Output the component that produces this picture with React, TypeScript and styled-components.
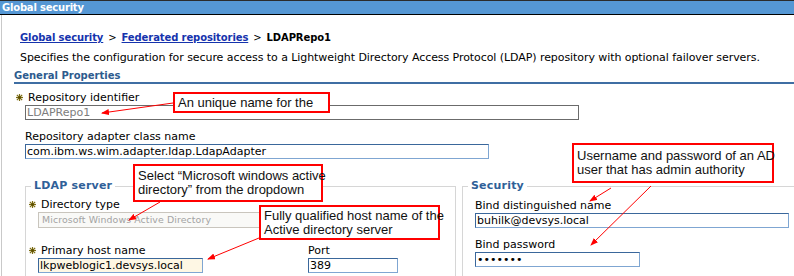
import React from "react";
import styled, { createGlobalStyle } from "styled-components";

const GlobalStyle = createGlobalStyle`
  html, body { margin: 0; padding: 0; background: #fff; }
  body { font-family: "DejaVu Sans", Verdana, sans-serif; }
`;

const Screen = styled.div`
  position: relative;
  width: 794px;
  height: 276px;
  overflow: hidden;
  background: #fff;
  font-family: "DejaVu Sans", Verdana, sans-serif;
  color: #000;
`;

const TitleBar = styled.div`
  height: 13px;
  border-top: 1px solid #2b2b2b;
  border-bottom: 1px solid #000;
  background: #5597d4;
  color: #fff;
  font-weight: bold;
  font-size: 10px;
  line-height: 13px;
  padding-left: 2px;
  letter-spacing: -0.2px;
  white-space: nowrap;
`;

const Main = styled.div`
  margin-left: 1px;
  border-left: 1px solid #c9c9c9;
  padding: 16px 0 0 12px;
  height: 300px;
`;

const Breadcrumb = styled.div`
  padding-left: 6px;
  font-size: 10px;
  font-weight: bold;
  line-height: 14px;
  letter-spacing: -0.1px;
  white-space: nowrap;
`;

const Crumb = styled.a`
  color: #1533ad;
  text-decoration: underline;
`;

const Sep = styled.span`
  font-weight: normal;
  margin: 0 5px;
`;

const Description = styled.div`
  margin-top: 6px;
  padding-left: 6px;
  font-size: 11px;
  line-height: 14px;
  letter-spacing: -0.07px;
  white-space: nowrap;
`;

const SectionHeader = styled.div`
  margin-top: 4px;
  font-size: 10px;
  font-weight: bold;
  line-height: 13px;
  color: #2d5b8e;
  border-bottom: 2px solid #3f6ea3;
`;

const Fields = styled.div`
  margin-top: 7px;
  padding-left: 11px;
  display: flex;
  flex-direction: column;
`;

const Field = styled.div<{ $gap?: number }>`
  display: flex;
  flex-direction: column;
  align-items: flex-start;
  margin-top: ${(p) => p.$gap ?? 0}px;
`;

const Label = styled.label<{ $required?: boolean }>`
  display: flex;
  align-items: center;
  height: 13px;
  line-height: 13px;
  font-size: 11px;
  white-space: nowrap;
  margin-left: ${(p) => (p.$required ? -11 : 0)}px;
`;

const StarWrap = styled.span`
  display: inline-flex;
  align-items: center;
  width: 14px;
  padding-left: 2px;
  box-sizing: border-box;
`;

const TextInput = styled.input<{ $w: number; $variant?: "disabled" | "focus" }>`
  box-sizing: border-box;
  width: ${(p) => p.$w}px;
  height: 15px;
  margin: 1px 0 0;
  padding: 0 1px;
  font-family: "DejaVu Sans", Verdana, sans-serif;
  font-size: 11px;
  border: 1px solid;
  border-color: ${(p) =>
    p.$variant === "disabled" ? "#6b6b6b" : "#3a679b #7fa6d2 #7fa6d2 #3a679b"};
  background: ${(p) => (p.$variant === "focus" ? "#fef7e4" : "#fff")};
  color: ${(p) => (p.$variant === "disabled" ? "#7d7d7d" : "#000")};
  outline: none;
`;

const Select = styled.select<{ $w: number }>`
  appearance: none;
  box-sizing: border-box;
  width: ${(p) => p.$w}px;
  height: 16px;
  margin: 1px 0 0;
  padding: 0 0 0 3px;
  font-family: "DejaVu Sans", Verdana, sans-serif;
  font-size: 9.4px;
  line-height: 14px;
  letter-spacing: 0.1px;
  border: 1px solid #c9c5bd;
  background: #f9f9f7;
  color: #a3a3a3;
  outline: none;
`;

const FieldsetRow = styled.div`
  margin-top: 20px;
  margin-left: 11px;
  display: flex;
  align-items: flex-start;
  gap: 6px;
`;

const Group = styled.fieldset<{ $w: number; $padTop: number }>`
  box-sizing: border-box;
  width: ${(p) => p.$w}px;
  flex-shrink: 0;
  min-height: 140px;
  margin: 0;
  border: 1px solid #d6d6d6;
  padding: ${(p) => p.$padTop}px 12px 0 12px;
`;

const Legend = styled.legend`
  margin-left: -7px;
  padding: 0 3px;
  font-size: 11px;
  font-weight: bold;
  line-height: 14px;
  color: #2f6098;
  letter-spacing: 0.2px;
`;

const HostRow = styled.div`
  margin-top: 16px;
  display: grid;
  grid-template-columns: 270px auto;
`;

const Callout = styled.div<{ $x: number; $y: number; $w: number; $h: number }>`
  position: absolute;
  left: ${(p) => p.$x}px;
  top: ${(p) => p.$y}px;
  width: ${(p) => p.$w}px;
  height: ${(p) => p.$h}px;
  box-sizing: border-box;
  border: 2px solid #ff0000;
  background: #fff;
  padding: 0 3px;
  display: flex;
  flex-direction: column;
  justify-content: center;
  font-family: "Liberation Sans", Arial, sans-serif;
  font-size: 13px;
  line-height: 14px;
  color: #111;
  white-space: nowrap;
  z-index: 2;
`;

const ArrowLayer = styled.svg`
  position: absolute;
  left: 0;
  top: 0;
  z-index: 3;
  pointer-events: none;
`;

const Star = () => (
  <StarWrap>
    <svg width="7" height="7" viewBox="0 0 7 7">
      <g stroke="#7c6c12" strokeWidth="1.2" strokeLinecap="square">
        <line x1="3.5" y1="0.5" x2="3.5" y2="6.5" />
        <line x1="0.5" y1="3.5" x2="6.5" y2="3.5" />
        <line x1="1.3" y1="1.3" x2="5.7" y2="5.7" />
        <line x1="5.7" y1="1.3" x2="1.3" y2="5.7" />
      </g>
      <circle cx="3.5" cy="3.5" r="1.3" fill="#5a4c00" />
    </svg>
  </StarWrap>
);

const arrows: Array<[number, number, number, number]> = [
  [173, 103, 102, 113],
  [160, 202, 129, 220],
  [259, 238, 208, 259],
  [611, 188, 590, 201],
  [651, 186, 591, 245],
];

export default function App() {
  return (
    <Screen>
      <GlobalStyle />
      <TitleBar>Global security</TitleBar>
      <Main>
        <Breadcrumb>
          <Crumb>Global security</Crumb>
          <Sep>&gt;</Sep>
          <Crumb>Federated repositories</Crumb>
          <Sep>&gt;</Sep>
          LDAPRepo1
        </Breadcrumb>
        <Description>
          Specifies the configuration for secure access to a Lightweight Directory Access
          Protocol (LDAP) repository with optional failover servers.
        </Description>
        <SectionHeader>General Properties</SectionHeader>
        <Fields>
          <Field>
            <Label $required>
              <Star />
              Repository identifier
            </Label>
            <TextInput $w={554} $variant="disabled" defaultValue="LDAPRepo1" readOnly />
          </Field>
          <Field $gap={10}>
            <Label>Repository adapter class name</Label>
            <TextInput $w={464} defaultValue="com.ibm.ws.wim.adapter.ldap.LdapAdapter" readOnly />
          </Field>
        </Fields>
        <FieldsetRow>
          <Group $w={431} $padTop={5}>
            <Legend>LDAP server</Legend>
            <Field>
              <Label $required>
                <Star />
                Directory type
              </Label>
              <Select $w={250} defaultValue="AD">
                <option value="AD">Microsoft Windows Active Directory</option>
              </Select>
            </Field>
            <HostRow>
              <Field>
                <Label $required>
                  <Star />
                  Primary host name
                </Label>
                <TextInput $w={165} $variant="focus" defaultValue="lkpweblogic1.devsys.local" readOnly />
              </Field>
              <Field>
                <Label>Port</Label>
                <TextInput $w={90} defaultValue="389" readOnly />
              </Field>
            </HostRow>
          </Group>
          <Group $w={360} $padTop={6}>
            <Legend>Security</Legend>
            <Field>
              <Label>Bind distinguished name</Label>
              <TextInput $w={314} defaultValue="buhilk@devsys.local" readOnly />
            </Field>
            <Field $gap={10}>
              <Label>Bind password</Label>
              <TextInput $w={165} type="password" defaultValue="1234567" readOnly />
            </Field>
          </Group>
        </FieldsetRow>
      </Main>

      <Callout $x={173} $y={92} $w={157} $h={21}>
        An unique name for the
      </Callout>
      <Callout $x={133} $y={164} $w={190} $h={38}>
        <span>Select “Microsoft windows active</span>
        <span>directory” from the dropdown</span>
      </Callout>
      <Callout $x={259} $y={205} $w={181} $h={35}>
        <span>Fully qualified host name of the</span>
        <span>Active directory server</span>
      </Callout>
      <Callout $x={572} $y={143} $w={202} $h={40}>
        <span>Username and password of an AD</span>
        <span>user that has admin authority</span>
      </Callout>

      <ArrowLayer width="794" height="276" viewBox="0 0 794 276">
        <defs>
          <marker
            id="arrowhead"
            markerWidth="8"
            markerHeight="6"
            refX="7"
            refY="3"
            orient="auto"
            markerUnits="userSpaceOnUse"
          >
            <path d="M0,0 L8,3 L0,6 z" fill="#ff0000" />
          </marker>
        </defs>
        {arrows.map(([x1, y1, x2, y2], i) => (
          <line
            key={i}
            x1={x1}
            y1={y1}
            x2={x2}
            y2={y2}
            stroke="#ff0000"
            strokeWidth="1"
            markerEnd="url(#arrowhead)"
          />
        ))}
      </ArrowLayer>
    </Screen>
  );
}
